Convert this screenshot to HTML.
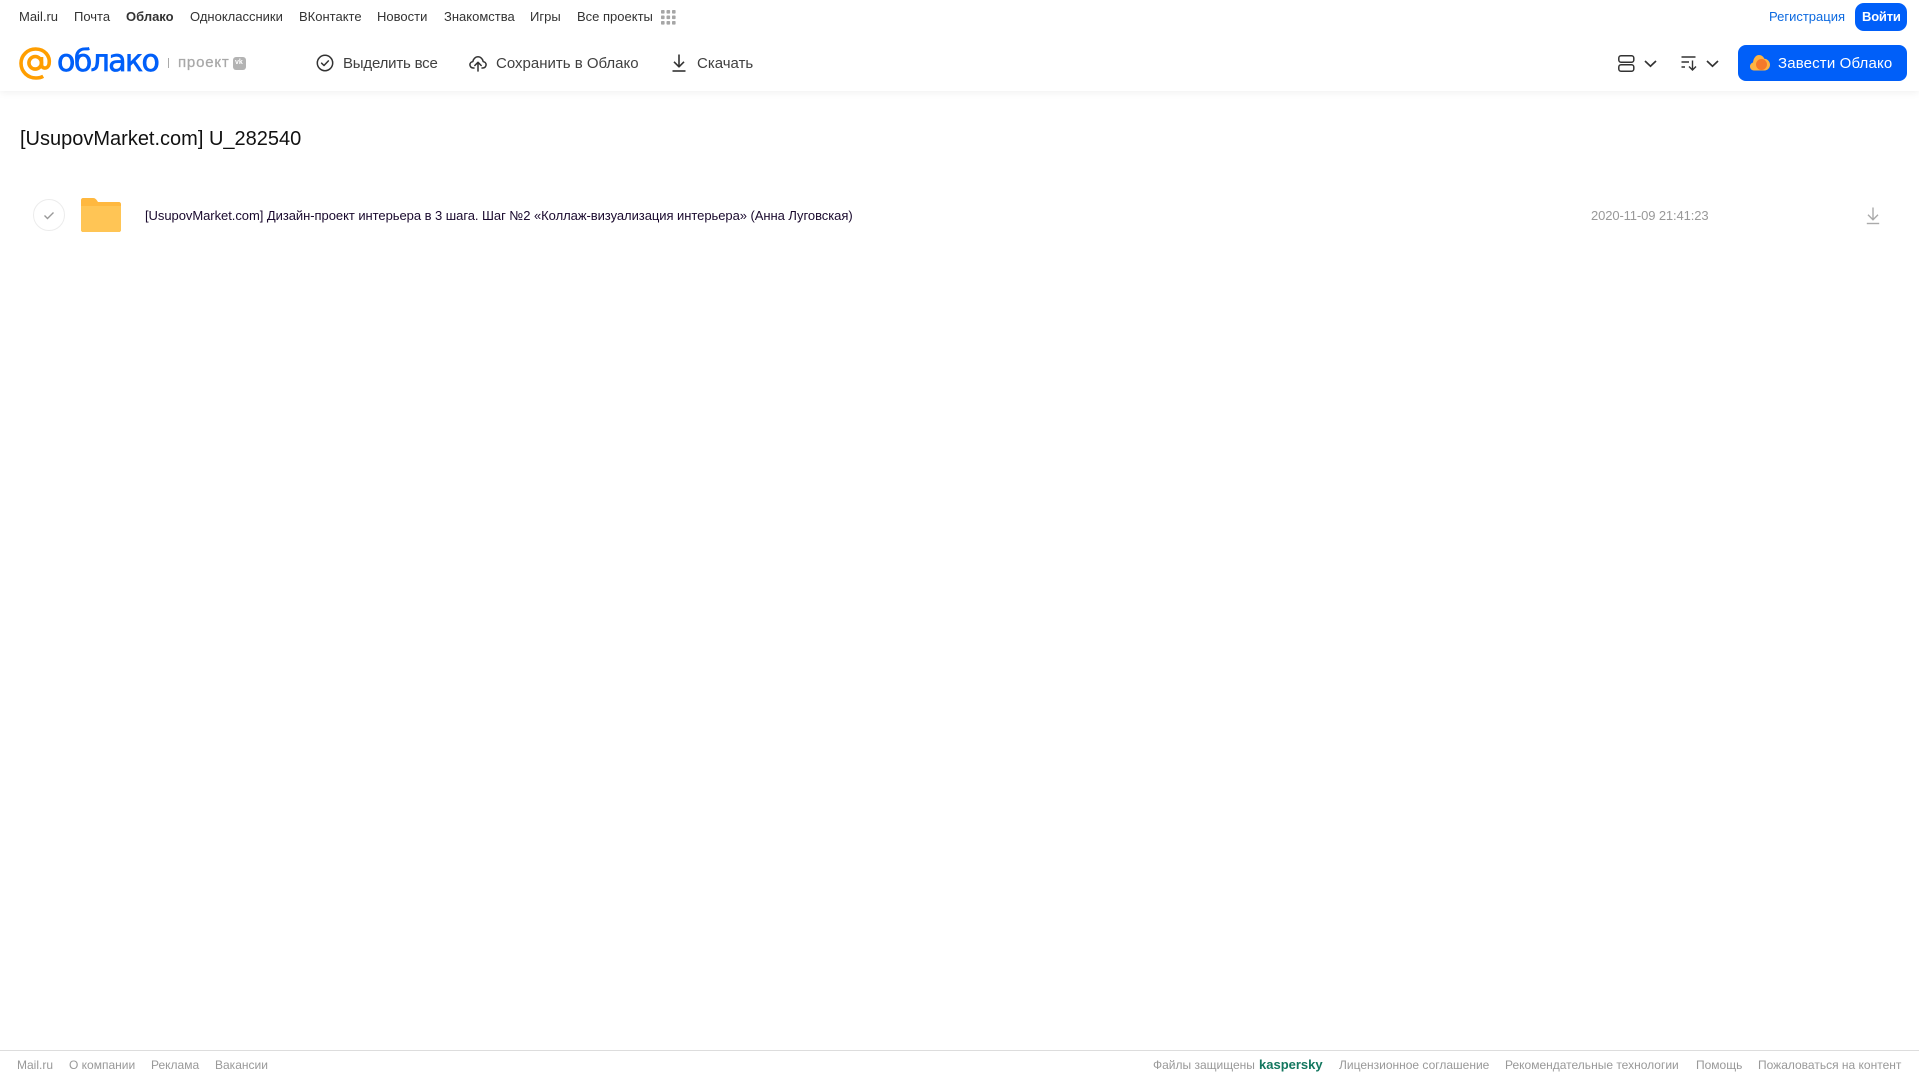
<!DOCTYPE html>
<html lang="ru">
<head>
<meta charset="utf-8">
<title>Облако</title>
<style>
html,body{margin:0;padding:0;background:#fff;}
body{width:1919px;height:1079px;position:relative;overflow:hidden;font-family:"Liberation Sans",sans-serif;}
.t{position:absolute;white-space:nowrap;line-height:20px;}
.n{font-size:13px;top:7px;color:#333;}
.a{font-size:15px;top:54px;color:#404040;}
.f{font-size:12px;top:1055px;color:#999;}
svg{position:absolute;overflow:visible;}
#hd{position:absolute;left:0;top:0;width:1919px;height:91px;background:#fff;box-shadow:0 1px 8px rgba(0,0,0,.07);}
</style>
</head>
<body>
<div id="hd"></div>
<span class="t n" style="left:19px">Mail.ru</span>
<span class="t n" style="left:74px">Почта</span>
<span class="t n" style="left:126px;font-weight:700">Облако</span>
<span class="t n" style="left:190px">Одноклассники</span>
<span class="t n" style="left:299px">ВКонтакте</span>
<span class="t n" style="left:377px">Новости</span>
<span class="t n" style="left:444px">Знакомства</span>
<span class="t n" style="left:530px">Игры</span>
<span class="t n" style="left:577px">Все проекты</span>
<svg style="left:661px;top:10px" width="15" height="15" fill="#a6a6a6"><rect x="0" y="0" width="3.6" height="3.6" rx=".8"/><rect x="5.5" y="0" width="3.6" height="3.6" rx=".8"/><rect x="11" y="0" width="3.6" height="3.6" rx=".8"/><rect x="0" y="5.5" width="3.6" height="3.6" rx=".8"/><rect x="5.5" y="5.5" width="3.6" height="3.6" rx=".8"/><rect x="11" y="5.5" width="3.6" height="3.6" rx=".8"/><rect x="0" y="11" width="3.6" height="3.6" rx=".8"/><rect x="5.5" y="11" width="3.6" height="3.6" rx=".8"/><rect x="11" y="11" width="3.6" height="3.6" rx=".8"/></svg>
<span class="t n" style="left:1769px;color:#0d6ae0">Регистрация</span>
<div style="position:absolute;left:1855px;top:3px;width:52px;height:28px;border-radius:9px;background:#005ff9"></div>
<span class="t n" style="left:1862px;color:#fff;font-weight:700;font-size:13px;letter-spacing:-.2px">Войти</span>

<!-- logo -->
<svg style="left:19px;top:47px" width="33" height="33" viewBox="0 0 33 33" fill="none" stroke="#ff9e00" stroke-width="3.6"><circle cx="16.2" cy="15.8" r="6.3"/><path d="M22.5 10v7.4c0 5 6.6 5 7.600-.4 1.400-8-4.600-15-13.400-15C8.600 2 2 8.300 2 16.300 2 25 9 31 17 31c2.600 0 5-.5 7.200-1.700"/></svg>
<span class="t" style="left:57px;top:44px;font-size:30px;line-height:36px;color:#005ff9;font-family:'DejaVu Sans',sans-serif;letter-spacing:-1.600px;-webkit-text-stroke:.7px #005ff9">облако</span>
<div style="position:absolute;left:168px;top:58px;width:1px;height:10px;background:#aaa"></div>
<span class="t" style="left:178px;top:53px;font-size:15px;color:#a8a8a8;letter-spacing:.8px;-webkit-text-stroke:.25px #a8a8a8">проект</span>
<div style="position:absolute;left:233px;top:57px;width:13px;height:13px;border-radius:3px;background:#b3b3b3"></div>
<span class="t" style="left:235px;top:53px;font-size:7px;color:#fff;font-weight:700">vk</span>

<!-- actions -->
<svg style="left:316px;top:54px" width="18" height="18" viewBox="0 0 18 18" fill="none" stroke="#333" stroke-width="1.500"><circle cx="9" cy="9" r="7.700"/><path d="M5.600 9.200l2.400 2.300 4.400-4.600" stroke-linecap="round" stroke-linejoin="round"/></svg>
<span class="t a" style="left:343px;letter-spacing:-.2px">Выделить все</span>
<svg style="left:469px;top:54px" width="18" height="18" viewBox="0 0 18 18" fill="none" stroke="#333" stroke-width="1.500" stroke-linecap="round" stroke-linejoin="round"><path d="M5 14H4.200C2.300 14 .9 12.500.9 10.800c0-1.700 1.300-3 2.900-3.200C4.300 4.800 6.400 2.800 9 2.800c2.600 0 4.700 2 5.200 4.800 1.600.2 2.900 1.500 2.900 3.200 0 1.700-1.400 3.200-3.300 3.200H13"/><path d="M9 17V8.500M5.800 11.500L9 8.300l3.200 3.200"/></svg>
<span class="t a" style="left:496px">Сохранить в Облако</span>
<svg style="left:670px;top:54px" width="18" height="18" viewBox="0 0 18 18" fill="none" stroke="#333" stroke-width="1.600"><path d="M9 .5v12M4 7.800l5 5 5-5" stroke-linejoin="round"/><path d="M2.500 17h13"/></svg>
<span class="t a" style="left:697px">Скачать</span>

<!-- right controls -->
<svg style="left:1618px;top:55px" width="17" height="17" viewBox="0 0 17 17" fill="none" stroke="#333" stroke-width="1.500"><rect x=".8" y=".8" width="15" height="6.400" rx="2.200"/><rect x=".8" y="9.800" width="15" height="6.400" rx="2.200"/></svg>
<svg style="left:1644px;top:60px" width="13" height="8" viewBox="0 0 13 8" fill="none" stroke="#333" stroke-width="1.700"><path d="M1 1l5.500 5.200L12 1"/></svg>
<svg style="left:1681px;top:55px" width="17" height="17" viewBox="0 0 17 17" fill="none" stroke="#333" stroke-width="1.400"><path d="M.5 2h14M.5 7h7.500M.5 12h3.500"/><path d="M11.500 5.500v9.500M8 11.500l3.500 3.500 3.500-3.500"/></svg>
<svg style="left:1706px;top:60px" width="13" height="8" viewBox="0 0 13 8" fill="none" stroke="#333" stroke-width="1.700"><path d="M1 1l5.500 5.200L12 1"/></svg>
<div style="position:absolute;left:1738px;top:45px;width:169px;height:36px;border-radius:8px;background:#005ff9"></div>
<svg style="left:1750px;top:54px" width="20" height="17" viewBox="0 0 20 17"><path d="M4 16.500C1.500 16.500 0 14.500 0 12.500c0-2 1.300-3.500 3-4C3.500 4 6 1 9 1c2.500 0 4.500 1.600 5.300 3.800C17.500 5 20 7.500 20 10.800c0 3.200-2.500 5.700-5.500 5.700z" fill="#ffb340"/><circle cx="11.500" cy="10.500" r="5.500" fill="#f5792a"/></svg>
<span class="t a" style="left:1778px;color:#fff;letter-spacing:.15px">Завести Облако</span>

<!-- title -->
<span class="t" style="left:20px;top:127px;font-size:20px;line-height:24px;color:#111">[UsupovMarket.com] U_282540</span>

<!-- row -->
<div style="position:absolute;left:33px;top:199px;width:30px;height:30px;border:1px solid #ececec;border-radius:50%;background:#fff"></div>
<svg style="left:43px;top:211px" width="12" height="9" viewBox="0 0 12 9" fill="none" stroke="#999" stroke-width="1.400"><path d="M1.500 4.500l3 3L10.500 1.500"/></svg>
<svg style="left:81px;top:198px" width="40" height="34" viewBox="0 0 40 34"><path d="M2 0h10c2 0 3 1 4 2.500L17 4h21c1.100 0 2 .9 2 2v26c0 1.100-.9 2-2 2H2c-1.100 0-2-.9-2-2V2C0 .9.900 0 2 0z" fill="#ffb83f"/><path d="M0 8h40v24c0 1.100-.9 2-2 2H2c-1.100 0-2-.9-2-2z" fill="#ffc555"/></svg>
<span class="t" style="left:145px;top:206px;font-size:13px;letter-spacing:-.05px;color:#1a0a2e">[UsupovMarket.com] Дизайн-проект интерьера в 3 шага. Шаг №2 «Коллаж-визуализация интерьера» (Анна Луговская)</span>
<span class="t" style="left:1591px;top:206px;font-size:13px;letter-spacing:-.12px;color:#999">2020-11-09 21:41:23</span>
<svg style="left:1866px;top:207px" width="14" height="18" viewBox="0 0 14 18" fill="none" stroke="#aaa" stroke-width="1.400"><path d="M7 .5v12M2 7.800l5 5 5-5"/><path d="M.8 16.500h12.400"/></svg>

<!-- footer -->
<div style="position:absolute;left:0;top:1050px;width:1919px;height:1px;background:#ddd"></div>
<span class="t f" style="left:17px">Mail.ru</span>
<span class="t f" style="left:69px">О компании</span>
<span class="t f" style="left:151px">Реклама</span>
<span class="t f" style="left:215px">Вакансии</span>
<span class="t f" style="left:1153px">Файлы защищены</span>
<span class="t f" style="left:1259px;color:#13775f;font-weight:700;font-size:13px">kaspersky</span>
<span class="t f" style="left:1339px">Лицензионное соглашение</span>
<span class="t f" style="left:1505px">Рекомендательные технологии</span>
<span class="t f" style="left:1696px">Помощь</span>
<span class="t f" style="left:1758px">Пожаловаться на контент</span>
</body>
</html>
